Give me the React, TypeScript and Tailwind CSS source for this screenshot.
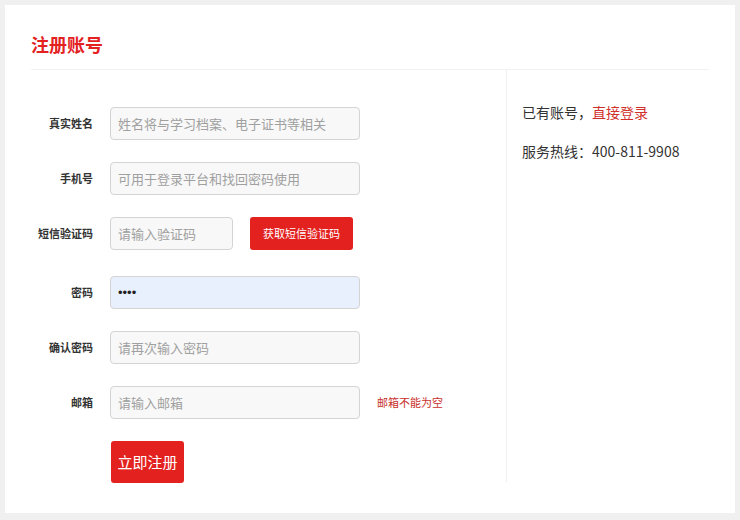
import React from "react";

const font = { fontFamily: '"Noto Sans CJK SC", "Microsoft YaHei", sans-serif' };

function Row({
  label,
  children,
  className = "",
}: {
  label: string;
  children: React.ReactNode;
  className?: string;
}) {
  return (
    <div className={"flex items-center h-[33px] " + className}>
      <div className="w-[62px] text-right text-[11px] font-bold text-[#333]">{label}</div>
      <div className="ml-[17px] flex items-center">{children}</div>
    </div>
  );
}

function Field({ placeholder, w = 250, filled }: { placeholder: string; w?: number; filled?: boolean }) {
  return (
    <input
      readOnly
      type="text"
      defaultValue={filled ? "••••" : ""}
      placeholder={placeholder}
      style={{ width: w, fontFamily: filled ? '"Liberation Sans", Arial, sans-serif' : undefined }}
      className={
        "h-[33px] rounded-[4px] border border-[#d4d4d4] px-[7px] text-[13px] text-[#222] placeholder:text-[#a0a0a0] outline-none " +
        (filled ? "bg-[#e8f0fe]" : "bg-[#f8f8f8]")
      }
    />
  );
}

export default function App() {
  return (
    <div className="min-h-[520px] bg-[#f0f0f0] p-[5px] pb-[7px]" style={font}>
      <div className="bg-white h-[508px] px-[26px]">
        {/* Header */}
        <div className="h-[65px] flex items-center border-b border-[#f2f2f2]">
          <h1 className="text-[18px] font-bold text-[#e3211f] leading-none pt-[14px]">注册账号</h1>
        </div>

        <div className="flex">
          {/* Form */}
          <div className="w-[475px] pt-[37px] flex flex-col gap-[22px]">
            <Row label="真实姓名">
              <Field placeholder="姓名将与学习档案、电子证书等相关" />
            </Row>
            <Row label="手机号">
              <Field placeholder="可用于登录平台和找回密码使用" />
            </Row>
            <Row label="短信验证码">
              <Field placeholder="请输入验证码" w={123} />
              <button className="ml-[17px] w-[103px] h-[33px] rounded-[3px] bg-[#e3211f] text-white text-[11px]">
                获取短信验证码
              </button>
            </Row>
            <Row label="密码" className="mt-[4px]">
              <Field placeholder="" filled />
            </Row>
            <Row label="确认密码">
              <Field placeholder="请再次输入密码" />
            </Row>
            <Row label="邮箱">
              <Field placeholder="请输入邮箱" />
              <span className="ml-[17px] text-[11px] text-[#c9302c]">邮箱不能为空</span>
            </Row>
            <div className="pl-[80px]">
              <button className="w-[73px] h-[42px] rounded-[3px] bg-[#e3211f] text-white text-[15px]">
                立即注册
              </button>
            </div>
          </div>

          {/* Side */}
          <div className="flex-1 border-l border-[#f0f0f0] pl-[15px] pt-[32px] h-[412px] text-[14px] text-[#333]">
            <p className="leading-[20px]">
              已有账号，<a className="text-[#d0312d]">直接登录</a>
            </p>
            <p className="leading-[20px] mt-[19px]">服务热线：400-811-9908</p>
          </div>
        </div>
      </div>
    </div>
  );
}
